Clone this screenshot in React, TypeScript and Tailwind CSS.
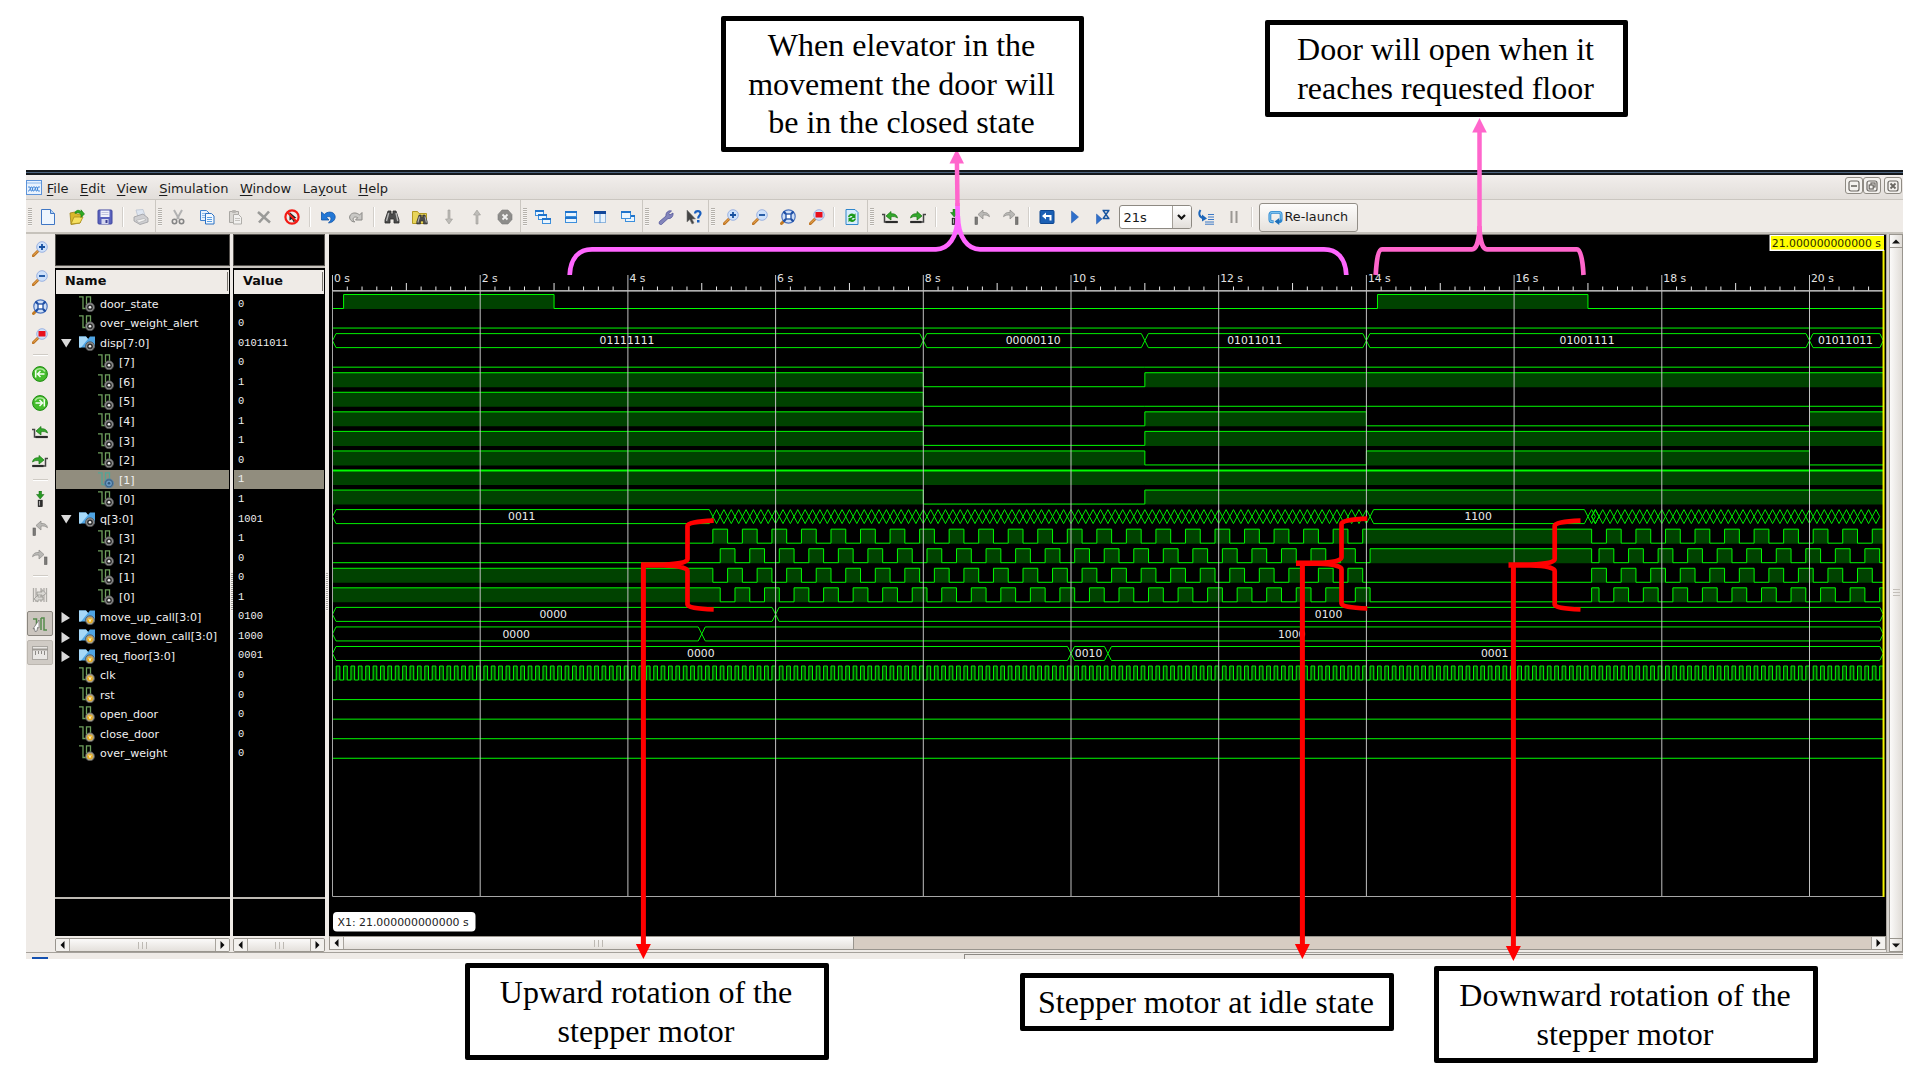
import React from "react";

type Seg = [number, number, string];

const X0 = 332.5;
const PX = 73.85;
const PITCH = 19.555;
const END = 21;
const tx = (t: number) => X0 + t * PX;
const rowTop = (i: number) => 294.5 + i * PITCH;
const HI = 14;

/* ------------------------------------------------------------------ */
/* Icons                                                               */
/* ------------------------------------------------------------------ */

const Svg = ({ children, s = 16 }: { children: React.ReactNode; s?: number }) => (
  <svg width={s} height={s} viewBox="0 0 16 16" fill="none" className="block shrink-0">
    {children}
  </svg>
);

const NewIcon = () => (
  <Svg>
    <path d="M1.5.5h9l4 4v11h-13z" fill="#eef5fd" stroke="#3f76c4" />
    <path d="M10.5.5v4h4" fill="#b7d3f3" stroke="#3f76c4" />
  </Svg>
);
const OpenIcon = () => (
  <Svg>
    <path d="M1 4l5-1 2 2h5v3l-2 6-9 1.500z" fill="#d9b82a" stroke="#9c8216" strokeWidth=".8" />
    <path d="M2 15l3-7h9l-3 6z" fill="#f5df5e" stroke="#a88d1c" strokeWidth=".8" />
    <path d="M6 3c2-2.500 5-2 6 0V.8L15.500 5 12 8.500V6C11 3.500 9 3 6 4.500z" fill="#2faa22" stroke="#157a10" strokeWidth=".6" />
  </Svg>
);
const SaveIcon = () => (
  <Svg>
    <rect x="1" y="1" width="14" height="14" rx="1" fill="#5b62bd" stroke="#4147a0" />
    <rect x="3.500" y="1.500" width="9" height="6.500" fill="#f2f2fa" />
    <path d="M4.500 3.500h7M4.500 5.500h7" stroke="#b5b8d8" strokeWidth=".8" />
    <rect x="4.500" y="10" width="7" height="5" fill="#d5d7ee" />
    <rect x="8.500" y="11" width="2" height="3" fill="#3a3f91" />
  </Svg>
);
const PrintIcon = () => (
  <Svg>
    <path d="M5 8L3 1l7-.5 2 6z" fill="#dfe6f1" stroke="#b4bdcb" strokeWidth=".7" />
    <path d="M1 8l9-3 5 4v4l-8 2.500L1 12z" fill="#cfcfd2" stroke="#9c9ca0" strokeWidth=".8" />
    <path d="M3 11.500l8-2 2 1.500-7 2.500z" fill="#f3f3f3" stroke="#aaa" strokeWidth=".6" />
  </Svg>
);
const CutIcon = () => (
  <Svg>
    <path d="M4 1l5 9M12 1L7 10" stroke="#b2b2b2" strokeWidth="2" />
    <circle cx="4.500" cy="12.500" r="2.200" stroke="#858585" strokeWidth="1.600" />
    <circle cx="11.500" cy="12.500" r="2.200" stroke="#858585" strokeWidth="1.600" />
  </Svg>
);
const CopyIcon = () => (
  <Svg>
    <path d="M1.500 1.500h6l2.500 2.500v7.500H1.500z" fill="#e6f1fd" stroke="#3f82cf" />
    <path d="M3 4.500h4M3 6.500h4M3 8.500h4" stroke="#8fbbe8" />
    <path d="M6.500 4.500h6L15 7v8H6.500z" fill="#f2f8fe" stroke="#2d72c4" />
    <path d="M8 8.500h5M8 10.500h5M8 12.500h5" stroke="#5c9fe2" />
  </Svg>
);
const PasteIcon = () => (
  <Svg>
    <path d="M2.500 2.500h9v11h-9z" fill="#dad8d4" stroke="#a9a7a3" />
    <rect x="5" y="1" width="4" height="3" rx="1" fill="#b7b5b1" />
    <path d="M6.500 5.500h5l3 3v6.500h-8z" fill="#f2f1ef" stroke="#b0aeaa" />
    <path d="M8 9.500h5M8 11.500h5" stroke="#c6c4c0" />
  </Svg>
);
const DeleteIcon = () => (
  <Svg>
    <path d="M2 3l12 10.500M13 2.500L3 13.500" stroke="#9a9a98" strokeWidth="2.600" />
  </Svg>
);
const BlockIcon = () => (
  <Svg>
    <path d="M5.500 3l7 6-2.500.3 1.500 3-2 .8-1.500-3-2.500 1.500z" fill="#222" />
    <circle cx="8" cy="8" r="6.600" stroke="#f21a14" strokeWidth="2.200" />
    <path d="M3.500 3.500l9 9" stroke="#f21a14" strokeWidth="2" />
  </Svg>
);
const UndoIcon = () => (
  <Svg>
    <path d="M1.500 3v8h7.500L6.500 8.300c3-1.800 5.500 0 4 3.200l-2 2.500c5.500-.5 8-5 6-8.500C12.500 2.300 7.500 2.300 4.300 5.500z" fill="#2277d6" stroke="#1254a8" strokeWidth=".8" />
  </Svg>
);
const RedoIcon = () => (
  <Svg>
    <path d="M14 3.500v7.500H7.500L9.700 8.700c-3-1.700-5.500 0-4.200 2.800l1.200 1.500C2 12.500.5 8.500 2.500 5.800c2.200-2.600 6.500-2.300 9 .2z" fill="#c9c8c5" stroke="#8a8986" strokeWidth="1" />
  </Svg>
);
const BinocPath = () => (
  <>
    <path d="M4 2h3v3h2V2h3l3 9v3h-5v-4H6v4H1v-3z" fill="#4b4b4b" stroke="#2c2c2c" strokeWidth=".8" />
    <path d="M4.700 4L2.500 12M12 4l1.800 8" stroke="#b5b5b5" strokeWidth="1.400" />
  </>
);
const FindIcon = () => (
  <Svg>
    <BinocPath />
  </Svg>
);
const FindFilesIcon = () => (
  <Svg>
    <path d="M.5 2.500h5l1.500 2h7.500v10H.5z" fill="#e8d55a" stroke="#b39a23" />
    <g transform="translate(4 4.500) scale(.75)">
      <BinocPath />
    </g>
  </Svg>
);
const ArrowDownIcon = () => (
  <Svg>
    <path d="M7 1h2v9h2.500L8 15l-3.500-5H7z" fill="#bebcb8" stroke="#9b9995" strokeWidth=".6" />
  </Svg>
);
const ArrowUpIcon = () => (
  <Svg>
    <path d="M7 15h2V6h2.500L8 1 4.500 6H7z" fill="#bebcb8" stroke="#9b9995" strokeWidth=".6" />
  </Svg>
);
const StopIcon = () => (
  <Svg>
    <path d="M5 1h6l4 4.500v5L11 15H5l-4-4.500v-5z" fill="#8d8c8a" stroke="#7b7a78" strokeWidth=".6" />
    <path d="M5.500 5.500l5 5M10.500 5.500l-5 5" stroke="#f2f2f2" strokeWidth="1.800" />
  </Svg>
);
const WinBox = ({ x, y, w, h }: { x: number; y: number; w: number; h: number }) => (
  <>
    <rect x={x + 0.5} y={y + 0.5} width={w - 1} height={h - 1} fill="#eaf5fe" stroke="#3d8fdc" />
    <rect x={x} y={y} width={w} height={2} fill="#1f74cc" />
  </>
);
const CascadeIcon = () => (
  <Svg>
    <WinBox x={0} y={1} w={9} h={6} />
    <WinBox x={3} y={5} w={9} h={6} />
    <WinBox x={7} y={9} w={9} h={6} />
  </Svg>
);
const TileHIcon = () => (
  <Svg>
    <WinBox x={2} y={2} w={12} h={6} />
    <WinBox x={2} y={8} w={12} h={6} />
  </Svg>
);
const TileVIcon = () => (
  <Svg>
    <rect x="2.500" y="2.500" width="11" height="11" fill="#e8f3fd" stroke="#8fb5dd" />
    <path d="M2 3.500h12" stroke="#12479a" strokeWidth="3" />
    <path d="M8 5v9" stroke="#5f9ad6" />
  </Svg>
);
const LayersIcon = () => (
  <Svg>
    <WinBox x={5} y={6} w={10} h={7} />
    <WinBox x={1} y={2} w={10} h={8} />
  </Svg>
);
const WrenchIcon = () => (
  <Svg>
    <path d="M1.500 12.500L8 7c-.5-3 2-6 5.500-5L10.800 4.500l1 1.500L15 4c.5 3.500-2 6-5 5.500l-6.500 6c-2 .5-3-1-2-3z" fill="#8385bb" stroke="#53569b" strokeWidth=".8" />
  </Svg>
);
const HelpIcon = () => (
  <Svg>
    <path d="M1 1v12l2.800-2.500L6 15l2-1-2-4h3.500z" fill="#444" stroke="#777" strokeWidth=".6" />
    <path d="M9 4.500c.3-3.300 5.500-3.300 5.500 0 0 2-2.300 2.200-2.300 5" stroke="#1a5fbe" strokeWidth="2.200" />
    <rect x="11" y="11" width="2.500" height="2.500" fill="#1a5fbe" />
  </Svg>
);
const Lens = ({ children }: { children?: React.ReactNode }) => (
  <Svg>
    <path d="M1.200 14.800L6.500 9.500" stroke="#bd7322" strokeWidth="2.800" strokeLinecap="round" />
    <path d="M1.500 14.200L6.200 9.500" stroke="#f0b056" strokeWidth="1" strokeLinecap="round" />
    <circle cx="10" cy="6" r="5.300" fill="#cfe1fa" stroke="#9cb3e2" strokeWidth="1" />
    {children}
  </Svg>
);
const ZoomInIcon = () => (
  <Lens>
    <path d="M7 6h6M10 3v6" stroke="#17509f" strokeWidth="1.800" />
  </Lens>
);
const ZoomOutIcon = () => (
  <Lens>
    <path d="M7 6h6" stroke="#17509f" strokeWidth="1.800" />
  </Lens>
);
const ZoomSelIcon = () => (
  <Lens>
    <rect x="6.500" y="3" width="7" height="5.500" fill="#e80f1c" />
  </Lens>
);
const ZoomFitIcon = () => (
  <Svg>
    <path d="M1.500 14.500L4 12" stroke="#c27a24" strokeWidth="3" strokeLinecap="round" />
    <circle cx="8.500" cy="7.500" r="6.700" fill="#cfdff6" stroke="#4b74bf" strokeWidth="1.200" />
    <rect x="6" y="5" width="5" height="5" fill="#fff" stroke="#1d4da4" strokeWidth="1.300" />
    <path d="M3.500 2.500L6 5M13.500 2.500L11 5M3.500 12.500L6 10M13.500 12.500L11 10" stroke="#1d4da4" strokeWidth="2.200" />
  </Svg>
);
const ReloadIcon = () => (
  <Svg>
    <path d="M2 .5h9l3 3v12H2z" fill="#d8ecfc" stroke="#2f86cc" />
    <path d="M4 8c.5-3.500 4.500-4.500 6.300-2.500l1.200-1.200V9H7l1.500-1.700C7.500 6.500 6 7 5.500 8z" fill="#1c9a1c" />
    <path d="M12 9.500c-.5 3.500-4.500 4.500-6.300 2.500L4.500 13.200V8.800H9l-1.500 1.500c1 .8 2.500.4 3-.8z" fill="#1c9a1c" />
  </Svg>
);
const PrevEdgeIcon = () => (
  <Svg>
    <path d="M0 5.500h2.500V13H16" stroke="#444" strokeWidth="1.500" />
    <path d="M3.500 13h12" stroke="#2b2b2b" strokeWidth="2.200" />
    <path d="M4 7l5-4.500v2.300c3.500-.5 6 1 6.500 4.200-2-1.500-4-1.700-6.500-1.200V11z" fill="#33a92c" stroke="#15720f" strokeWidth=".7" />
  </Svg>
);
const NextEdgeIcon = () => (
  <Svg>
    <path d="M0 13h13.500V5.500H16" stroke="#444" strokeWidth="1.500" />
    <path d="M.5 13h11" stroke="#2b2b2b" strokeWidth="2.200" />
    <path d="M12 7L7 2.500v2.300C3.500 4.300 1 5.800.5 9c2-1.500 4-1.700 6.500-1.200V11z" fill="#33a92c" stroke="#15720f" strokeWidth=".7" />
  </Svg>
);
const AddMarkerIcon = () => (
  <Svg>
    <path d="M7 0h2.500v3.500H12L8.200 8 4.500 3.500H7z" fill="#279a24" stroke="#12650f" strokeWidth=".5" />
    <rect x="6.200" y="9.200" width="4" height="6.300" fill="#333" stroke="#111" strokeWidth=".7" />
    <path d="M7.500 10v4.500" stroke="#aaa" />
  </Svg>
);
const PrevMarkerIcon = () => (
  <Svg>
    <rect x="1" y="8" width="2.500" height="7.500" fill="#7b7a78" stroke="#5f5e5c" strokeWidth=".6" />
    <path d="M4 5.500L9 1v2.500c3.500-.5 6 1 6.500 4.200-2-1.500-4-2-6.500-1.500V10z" fill="#b9b8b5" stroke="#8c8b88" strokeWidth=".7" />
  </Svg>
);
const NextMarkerIcon = () => (
  <Svg>
    <rect x="12.500" y="8" width="2.500" height="7.500" fill="#7b7a78" stroke="#5f5e5c" strokeWidth=".6" />
    <path d="M12 5.500L7 1v2.500C3.500 3 1 4.500.5 7.700c2-1.500 4-2 6.500-1.500V10z" fill="#b9b8b5" stroke="#8c8b88" strokeWidth=".7" />
  </Svg>
);
const RestartIcon = () => (
  <Svg>
    <rect x="1" y="1.500" width="14" height="13" rx="1" fill="#1b5fb4" stroke="#0d4690" />
    <path d="M3 7l4-3.500V6h5.500v5.500h-2V8H7v2.500z" fill="#fff" />
  </Svg>
);
const PlayIcon = () => (
  <Svg>
    <path d="M4.500 2v12l7-6z" fill="#2f6fcb" stroke="#1f56a8" strokeWidth=".5" />
  </Svg>
);
const PlayForIcon = () => (
  <Svg>
    <path d="M1.500 5v10L7 10z" fill="#2f6fcb" stroke="#1f56a8" strokeWidth=".5" />
    <path d="M7.500 1.500h7M7.500 9.500h7M8.500 2l5 7M13.500 2l-5 7" stroke="#17559f" strokeWidth="1.400" />
  </Svg>
);
const StepIcon = () => (
  <Svg>
    <path d="M2.500 1C.5 4 1 8 5 9" stroke="#1d66ba" strokeWidth="2" />
    <path d="M4 5.500L9 9.500l-5 3z" fill="#1d66ba" />
    <path d="M10 5.500h6M10 8h6M10 10.500h6M7 13h9M7 15.200h9" stroke="#3b78c6" strokeWidth="1" />
  </Svg>
);
const PauseIcon = () => (
  <Svg>
    <path d="M5.500 2v12M10.500 2v12" stroke="#9b9894" strokeWidth="2" />
  </Svg>
);
const RelaunchIcon = () => (
  <svg width="15" height="15" viewBox="0 0 16 16" fill="none" className="block shrink-0">
    <path d="M6 12.500H4.500a2.500 2.500 0 01-2.500-2.500V5a2.500 2.500 0 012.500-2.500h7A2.500 2.500 0 0114 5v5a2.500 2.500 0 01-2.500 2.500" stroke="#2b86cf" strokeWidth="3" />
    <path d="M6 12.500H4.500a2.500 2.500 0 01-2.500-2.500V5a2.500 2.500 0 012.500-2.500h7A2.500 2.500 0 0114 5v5" stroke="#7cc2ee" strokeWidth="1.200" />
    <path d="M12 8.500v7.500l-5-3.700z" fill="#1e6fb8" />
  </svg>
);
const GreenCircle = ({ flip }: { flip?: boolean }) => (
  <Svg>
    <circle cx="8" cy="8" r="7.400" fill="#45bd2c" stroke="#1f8a12" />
    <path d="M3 5.500a6 6 0 0110 0" stroke="#a7e896" strokeWidth="1.500" />
    <path
      d={flip ? "M3.500 8h6.500M7.500 5l3 3-3 3M12.300 4.500v7" : "M12.500 8H6M8.500 5l-3 3 3 3M3.700 4.500v7"}
      stroke="#f3fff0"
      strokeWidth="1.500"
    />
  </Svg>
);
const SwapIcon = () => (
  <Svg>
    <path d="M1.500 1v14M4 1v14M9 1v14M12 1v14M14.500 1v14" stroke="#aeaca8" strokeWidth="1.300" />
    <path d="M5 5h5V2.500l4 4-4 3V8H5zM11 10H6V8l-4 4 4 3v-2h5z" fill="#d9d7d3" stroke="#918f8b" strokeWidth=".7" />
  </Svg>
);
const SnapIcon = () => (
  <Svg>
    <path d="M1 3h3.500v10M9 2v12M9 2h3v12h3" stroke="#568c4c" strokeWidth="1.500" />
    <path d="M7 4v8l-1.500-.5L5 15l-2 .5-.5-3L1 13z" fill="#fff" stroke="#666" strokeWidth=".7" />
  </Svg>
);
const RulerIcon = () => (
  <Svg>
    <rect x=".5" y="1.500" width="15" height="13" fill="#e9e7e4" stroke="#a9a6a1" />
    <path d="M0 4.500h16" stroke="#9c9994" strokeWidth="2" />
    <path d="M3.500 6v4M6.500 6v3M9.500 6v3M12.500 6v4" stroke="#8d8a86" />
  </Svg>
);

const Badge = ({ kind }: { kind: "out" | "in" | "sel" }) => (
  <>
    <circle
      cx="11"
      cy="11.300"
      r="4.500"
      fill={kind === "in" ? "#a8a28c" : kind === "sel" ? "#3e6485" : "#8f8f8f"}
      stroke={kind === "sel" ? "#5d87aa" : "#4d4d4d"}
      strokeWidth=".8"
    />
    <circle cx="11" cy="11.300" r="2.900" fill={kind === "in" ? "#e8ad20" : kind === "sel" ? "#6a9ac4" : "#333"} />
    {kind === "in" ? (
      <path d="M9.800 9.800l1.200 3 1.200-3" stroke="#fff3c8" strokeWidth=".9" />
    ) : (
      <circle cx="11" cy="11.300" r="1.300" fill={kind === "sel" ? "#30577a" : "#f0f0f0"} />
    )}
  </>
);
const WireIcon = ({ kind }: { kind: "out" | "in" | "sel" }) => (
  <Svg>
    <path d="M0 .8h4v11.700h3.500V.8h4V9" stroke={kind === "sel" ? "#53a596" : "#6e9f5d"} strokeWidth="1.300" />
    <Badge kind={kind} />
  </Svg>
);
const BusIcon = ({ kind }: { kind: "out" | "in" | "sel" }) => (
  <Svg>
    <path d="M0 1.500h7l2 2.500 2-2.500h5v11h-5l-2-2.500-2 2.500H0z" fill="#4ea4e4" />
    <path d="M0 1.500h7l2 2.500L2 12.500H0z" fill="#a6d8f8" />
    <Badge kind={kind} />
  </Svg>
);

/* ------------------------------------------------------------------ */
/* Toolbar                                                             */
/* ------------------------------------------------------------------ */

const Slot = ({ children }: { children: React.ReactNode }) => (
  <div className="flex w-[28.4px] shrink-0 items-center justify-center">{children}</div>
);
const Sep = () => (
  <div className="flex w-[7.4px] shrink-0 justify-center">
    <div className="h-[20px] w-px bg-[#d3cfca]" />
    <div className="h-[20px] w-px bg-white" />
  </div>
);
const Grip = () => (
  <div className="flex w-[8.1px] shrink-0 justify-center">
    <div className="h-[18px] w-[4px] bg-[repeating-linear-gradient(#b5b1ab_0_1px,#f6f4f2_1px_2px)]" />
  </div>
);
const Group = ({ children, last }: { children: React.ReactNode; last?: boolean }) => (
  <div className={last ? "flex h-full items-center pt-[2px]" : "flex h-full items-center border-r border-[#cbc7c1] pt-[2px]"}>
    <Grip />
    {children}
  </div>
);

const Toolbar = () => (
  <div className="flex h-[34px] items-stretch border-b-2 border-[#c6c2bb] bg-[#efebe7]">
    <div className="flex items-center">
      <Group>
        <Slot><NewIcon /></Slot>
        <Slot><OpenIcon /></Slot>
        <Slot><SaveIcon /></Slot>
        <Sep />
        <Slot><PrintIcon /></Slot>
      </Group>
      <Group>
        <Slot><CutIcon /></Slot>
        <Slot><CopyIcon /></Slot>
        <Slot><PasteIcon /></Slot>
        <Slot><DeleteIcon /></Slot>
        <Slot><BlockIcon /></Slot>
        <Sep />
        <Slot><UndoIcon /></Slot>
        <Slot><RedoIcon /></Slot>
        <Sep />
        <Slot><FindIcon /></Slot>
        <Slot><FindFilesIcon /></Slot>
        <Slot><ArrowDownIcon /></Slot>
        <Slot><ArrowUpIcon /></Slot>
        <Slot><StopIcon /></Slot>
      </Group>
      <Group>
        <Slot><CascadeIcon /></Slot>
        <Slot><TileHIcon /></Slot>
        <Slot><TileVIcon /></Slot>
        <Slot><LayersIcon /></Slot>
      </Group>
      <Group>
        <Slot><WrenchIcon /></Slot>
        <Slot><HelpIcon /></Slot>
      </Group>
      <Group>
        <Slot><ZoomInIcon /></Slot>
        <Slot><ZoomOutIcon /></Slot>
        <Slot><ZoomFitIcon /></Slot>
        <Slot><ZoomSelIcon /></Slot>
        <Sep />
        <Slot><ReloadIcon /></Slot>
      </Group>
      <Group last>
        <Slot><PrevEdgeIcon /></Slot>
        <Slot><NextEdgeIcon /></Slot>
        <Sep />
        <Slot><AddMarkerIcon /></Slot>
        <Slot><PrevMarkerIcon /></Slot>
        <Slot><NextMarkerIcon /></Slot>
        <Sep />
        <Slot><RestartIcon /></Slot>
        <Slot><PlayIcon /></Slot>
        <Slot><PlayForIcon /></Slot>
        <div className="ml-px flex h-[24px] w-[73px] shrink-0 overflow-hidden rounded-[3px] border border-[#8d8982] bg-white">
          <div className="flex flex-1 items-center pl-[4px] text-[13px] leading-none text-[#1a1a1a]">21s</div>
          <div className="flex w-[19px] items-center justify-center border-l border-[#a39f98] bg-gradient-to-b from-white to-[#e2deda]">
            <svg width="9" height="6" viewBox="0 0 9 6" fill="none">
              <path d="M1 1l3.500 3.500L8 1" stroke="#111" strokeWidth="2.200" />
            </svg>
          </div>
        </div>
        <Slot><StepIcon /></Slot>
        <Slot><PauseIcon /></Slot>
        <Sep />
        <div className="ml-[3px] flex h-[29px] w-[99px] shrink-0 items-center justify-center gap-[1px] rounded-[3px] border border-[#928e87] bg-gradient-to-b from-[#fdfcfb] to-[#e6e2dd] text-[12.800px] leading-none whitespace-nowrap text-[#1a1a1a]">
          <RelaunchIcon />
          <span>Re-launch</span>
        </div>
      </Group>
    </div>
  </div>
);

/* ------------------------------------------------------------------ */
/* Menu bar                                                            */
/* ------------------------------------------------------------------ */

const MENUS: [string, string, string][] = [
  ["", "F", "ile"],
  ["", "E", "dit"],
  ["", "V", "iew"],
  ["", "S", "imulation"],
  ["", "W", "indow"],
  ["La", "y", "out"],
  ["", "H", "elp"],
];

const MdiButton = ({ children }: { children: React.ReactNode }) => (
  <div className="flex h-[17px] w-[18px] items-center justify-center rounded-[3px] border border-[#8f8b84] bg-[#f4f2ef]">
    <svg width="12" height="12" viewBox="0 0 12 12" fill="none" stroke="#6a6762" strokeWidth="1.200">
      <rect x="1" y="1" width="10" height="10" rx="2" />
      {children}
    </svg>
  </div>
);

const MenuBar = () => (
  <div className="flex h-[25px] items-start border-b border-[#cac6c0] bg-gradient-to-b from-[#f2eeec] to-[#e2deda]">
    <div className="mt-[5px] flex h-[15px] w-[16px] shrink-0 items-center justify-center border border-[#5d93d8] bg-[#e9f2fd]">
      <svg width="14" height="12" viewBox="0 0 14 12" fill="none">
        <path d="M0 1h14" stroke="#a9cbf2" strokeWidth="1.500" />
        <path d="M1 5h2l1 4h1l1-4h2l1 4h1l1-4h2M1 9h1l2-4h1l1 4h1l2-4h1l1 4h2" stroke="#3f86d8" strokeWidth=".9" />
      </svg>
    </div>
    <div className="flex gap-[11.500px] pt-[5.500px] pl-[4.800px] text-[13px] leading-[16px] text-[#1c1c1c]">
      {MENUS.map(([a, b, c]) => (
        <span key={a + b + c}>
          {a}
          <span className="underline underline-offset-2">{b}</span>
          {c}
        </span>
      ))}
    </div>
    <div className="mt-[2px] mr-px ml-auto flex">
      <MdiButton><path d="M3 6h6" strokeWidth="1.600" /></MdiButton>
      <MdiButton>
        <rect x="5" y="3" width="4" height="4" />
        <rect x="3.200" y="5" width="4" height="4" fill="#f4f2ef" />
      </MdiButton>
      <div className="w-[3px]" />
      <MdiButton><path d="M3.500 3.500l5 5M8.500 3.500l-5 5" strokeWidth="1.800" /></MdiButton>
    </div>
  </div>
);

/* ------------------------------------------------------------------ */
/* Side bar                                                            */
/* ------------------------------------------------------------------ */

const SideSlot = ({ children }: { children: React.ReactNode }) => (
  <div className="flex h-[29.200px] shrink-0 items-center justify-center">{children}</div>
);
const SideSep = () => (
  <div className="flex h-[8.300px] shrink-0 items-center justify-center">
    <div className="h-[2px] w-[15px] border-t border-[#cfcbc5] bg-white" />
  </div>
);
const Pressed = ({ children, on }: { children: React.ReactNode; on?: boolean }) => (
  <div
    className={
      on
        ? "flex h-[25px] w-[26px] items-center justify-center rounded-[2px] border border-[#8a867f] bg-[#cbc5be]"
        : "flex h-[25px] w-[26px] items-center justify-center rounded-[2px] border border-[#bcb7b0] bg-[#d0cbc5]"
    }
  >
    {children}
  </div>
);
const SideBar = () => (
  <div className="flex w-[29px] shrink-0 flex-col bg-[#efebe7] pr-px">
    <SideSlot><ZoomInIcon /></SideSlot>
    <SideSlot><ZoomOutIcon /></SideSlot>
    <SideSlot><ZoomFitIcon /></SideSlot>
    <SideSlot><ZoomSelIcon /></SideSlot>
    <SideSep />
    <SideSlot><GreenCircle /></SideSlot>
    <SideSlot><GreenCircle flip /></SideSlot>
    <SideSlot><PrevEdgeIcon /></SideSlot>
    <SideSlot><NextEdgeIcon /></SideSlot>
    <SideSep />
    <SideSlot><AddMarkerIcon /></SideSlot>
    <SideSlot><PrevMarkerIcon /></SideSlot>
    <SideSlot><NextMarkerIcon /></SideSlot>
    <SideSep />
    <SideSlot><SwapIcon /></SideSlot>
    <SideSlot><Pressed on><SnapIcon /></Pressed></SideSlot>
    <SideSlot><Pressed><RulerIcon /></Pressed></SideSlot>
  </div>
);

/* ------------------------------------------------------------------ */
/* Signal tree                                                         */
/* ------------------------------------------------------------------ */

type Row = { name: string; value: string; kind: "out" | "in" | "sel"; bus?: "open" | "closed"; child?: boolean };
const bit = (n: number, value: string, kind: "out" | "sel" = "out"): Row => ({ name: `[${n}]`, value, kind, child: true });
const ROWS: Row[] = [
  { name: "door_state", value: "0", kind: "out" },
  { name: "over_weight_alert", value: "0", kind: "out" },
  { name: "disp[7:0]", value: "01011011", kind: "out", bus: "open" },
  bit(7, "0"),
  bit(6, "1"),
  bit(5, "0"),
  bit(4, "1"),
  bit(3, "1"),
  bit(2, "0"),
  bit(1, "1", "sel"),
  bit(0, "1"),
  { name: "q[3:0]", value: "1001", kind: "out", bus: "open" },
  bit(3, "1"),
  bit(2, "0"),
  bit(1, "0"),
  bit(0, "1"),
  { name: "move_up_call[3:0]", value: "0100", kind: "in", bus: "closed" },
  { name: "move_down_call[3:0]", value: "1000", kind: "in", bus: "closed" },
  { name: "req_floor[3:0]", value: "0001", kind: "in", bus: "closed" },
  { name: "clk", value: "0", kind: "in" },
  { name: "rst", value: "0", kind: "in" },
  { name: "open_door", value: "0", kind: "in" },
  { name: "close_door", value: "0", kind: "in" },
  { name: "over_weight", value: "0", kind: "in" },
];

const NameRow = ({ r }: { r: Row }) => (
  <div className={r.kind === "sel" ? "mx-[1px] h-[19.555px] bg-[#918d7e]" : "mx-[1px] h-[19.555px]"}>
    <div className={r.child ? "flex h-full items-center pl-[42px]" : "flex h-full items-center pl-[5px]"}>
      {!r.child && (
        <span className="flex w-[18px] shrink-0 items-center pt-[2px]">
          {r.bus && (
            <svg width="11" height="11" viewBox="0 0 11 11" fill="#dadada">
              <path d={r.bus === "open" ? "M0 1h10.500L5.200 9.500z" : "M.5 0v11l8.500-5z"} />
            </svg>
          )}
        </span>
      )}
      {r.bus ? <BusIcon kind={r.kind} /> : <WireIcon kind={r.kind} />}
      <span className="pt-[1px] pl-[5px] text-[11.050px] leading-none whitespace-nowrap text-[#f0f0f0]">{r.name}</span>
    </div>
  </div>
);

const ArrowCell = ({ dir }: { dir: "left" | "right" }) => (
  <div
    className={
      dir === "left"
        ? "flex w-[14px] shrink-0 items-center justify-center border-r border-[#a8a49d] bg-[#f3f1ee]"
        : "flex w-[14px] shrink-0 items-center justify-center border-l border-[#a8a49d] bg-[#f3f1ee]"
    }
  >
    <svg width="5" height="8" viewBox="0 0 5 8" fill="#0a0a0a">
      <path d={dir === "left" ? "M4.500 0v8L.5 4z" : "M.5 0v8l4-4z"} />
    </svg>
  </div>
);
const HGrip = () => <div className="h-[7px] w-[9px] bg-[repeating-linear-gradient(90deg,#bdb9b3_0_1px,transparent_1px_4px)]" />;
const HScroll = () => (
  <div className="flex h-[14px] shrink-0 overflow-hidden rounded-[2px] border border-[#99958e]">
    <ArrowCell dir="left" />
    <div className="flex flex-1 items-center justify-center bg-gradient-to-b from-[#fbfaf9] to-[#e4e0db]">
      <HGrip />
    </div>
    <ArrowCell dir="right" />
  </div>
);

const Column = ({ title, children }: { title: string; children: React.ReactNode }) => (
  <>
    <div className="h-[32px] shrink-0 border border-[#55524e] bg-black" />
    <div className="h-[2px] shrink-0 bg-[#c9c5bf]" />
    <div className="flex h-[26px] shrink-0 border-x border-t-2 border-black bg-[#efebe7]">
      <div className="mt-[2px] mr-[1px] mb-[3px] flex flex-1 items-center border-r border-[#77736d] pl-[9px] text-[12.800px] leading-none font-bold text-[#0c0c0c]">
        {title}
      </div>
    </div>
    <div className="h-[603px] shrink-0 bg-black">{children}</div>
    <div className="h-[2px] shrink-0 bg-[#bdb9b3]" />
    <div className="mb-[2px] h-[37px] shrink-0 bg-black" />
    <HScroll />
  </>
);

const SplitGrip = () => <div className="h-[38px] w-[2px] bg-[repeating-linear-gradient(#a5a19b_0_1px,#f6f4f2_1px_2px)]" />;

/* ------------------------------------------------------------------ */
/* Waveforms                                                           */
/* ------------------------------------------------------------------ */

const DISP: Seg[] = [
  [0, 8, "01111111"],
  [8, 11, "00000110"],
  [11, 14, "01011011"],
  [14, 20, "01001111"],
  [20, 21, "01011011"],
];

type Edge = [number, number];

const dispBit = (n: number): Edge[] => DISP.map(([a, , code]) => [a, Number(code[7 - n])] as Edge);

const pulses = (start: number, stop: number): Edge[] => {
  const out: Edge[] = [];
  for (let t = start; t < stop - 0.001; t += 0.4) {
    out.push([t, 1]);
    if (t + 0.2 < stop + 0.001) out.push([t + 0.2, 0]);
  }
  return out;
};

const CLK: Edge[] = [[0, 0]];
for (let k = 0; k < 210; k++) {
  CLK.push([k * 0.1 + 0.05, 1]);
  CLK.push([(k + 1) * 0.1, 0]);
}

const LEVELS: { row: number; edges: Edge[]; bold?: boolean }[] = [
  { row: 0, edges: [[0, 0], [0.15, 1], [3, 0], [14.15, 1], [17, 0]] },
  { row: 1, edges: [[0, 0]] },
  ...[7, 6, 5, 4, 3, 2, 1, 0].map((n) => ({ row: 10 - n, edges: dispBit(n), bold: n === 1 })),
  { row: 12, edges: [[0, 0], ...pulses(5.15, 13.9), [13.95, 1], [17.05, 0], ...pulses(17.25, END)] },
  { row: 13, edges: [[0, 0], ...pulses(5.25, 14), [14.05, 1], [17.05, 0], ...pulses(17.15, END)] },
  { row: 14, edges: [[0, 1], [5.15, 0], ...pulses(5.35, 13.95), [17.05, 1], [17.25, 0], ...pulses(17.45, END)] },
  { row: 15, edges: [[0, 1], [5.25, 0], ...pulses(5.45, 14.05), [17.05, 1], [17.15, 0], ...pulses(17.35, END)] },
  { row: 19, edges: CLK },
  { row: 20, edges: [[0, 0]] },
  { row: 21, edges: [[0, 0]] },
  { row: 22, edges: [[0, 0]] },
  { row: 23, edges: [[0, 0]] },
];

const Level = ({ row, edges, bold }: { row: number; edges: Edge[]; bold?: boolean }) => {
  const hi = rowTop(row);
  const lo = hi + HI;
  let line = "";
  let fill = "";
  edges.forEach(([t, v], i) => {
    const next = Math.min(i + 1 < edges.length ? edges[i + 1][0] : END, END);
    const a = tx(t).toFixed(2);
    const b = tx(next).toFixed(2);
    const y = v ? hi : lo;
    line += `${i === 0 ? "M" : "L"}${a} ${y}L${b} ${y}`;
    if (v) fill += `M${a} ${hi}L${b} ${hi}L${b} ${lo + 0.5}L${a} ${lo + 0.5}z`;
  });
  return (
    <>
      <path d={fill} fill="#004200" />
      <path d={line} stroke="#00fa00" strokeWidth={bold ? 2 : 1} fill="none" />
    </>
  );
};

const busPath = (row: number, a: number, b: number, slope = 3.5) => {
  const t = rowTop(row);
  const m = t + HI / 2;
  const l = t + HI;
  const xa = tx(a);
  const xb = tx(b);
  const s = Math.min(slope, (xb - xa) / 2);
  return `M${xa} ${m}L${xa + s} ${t}L${xb - s} ${t}L${xb} ${m}L${xb - s} ${l}L${xa + s} ${l}z`;
};

const BUSES: { row: number; segs: Seg[] }[] = [
  { row: 2, segs: DISP },
  { row: 11, segs: [[0, 5.15, "0011"], [14.05, 17, "1100"]] },
  { row: 16, segs: [[0, 6, "0000"], [6, 21, "0100"]] },
  { row: 17, segs: [[0, 5, "0000"], [5, 21, "1000"]] },
  { row: 18, segs: [[0, 10, "0000"], [10, 10.5, "0010"], [10.5, 21, "0001"]] },
];

const range = (n: number) => Array.from({ length: n }, (_, i) => i);

const toggles =
  range(89).map((k) => busPath(11, 5.15 + k * 0.1, 5.25 + k * 0.1, 3.7)).join("") +
  range(2).map((k) => busPath(11, 17.0 + k * 0.05, 17.1 + k * 0.05, 3.7)).join("") +
  range(39).map((k) => busPath(11, 17.05 + k * 0.1, 17.15 + k * 0.1, 3.7)).join("");

const Waves = () => (
  <svg width="1557" height="701" viewBox="329 235 1557 701" className="block shrink-0 bg-black font-['DejaVu_Sans',sans-serif]">
    {LEVELS.map((l) => (
      <Level key={l.row} {...l} />
    ))}
    {BUSES.map(({ row, segs }) => (
      <path key={row} d={segs.map(([a, b]) => busPath(row, a, b)).join("")} stroke="#00f000" fill="none" />
    ))}
    <path d={toggles} stroke="#00ec00" fill="none" />

    <path d={`M${X0} 290.800H${tx(END)}`} stroke="#e8e8e8" strokeWidth="1.300" />
    {range(106).map((k) => {
      const x = tx(k * 0.2);
      if (k % 10 === 0 || k > 104) return null;
      return <path key={k} d={`M${x} ${k % 5 === 0 ? 283 : 286.500}V290.500`} stroke="#e6e6e6" />;
    })}
    {range(11).map((k) => (
      <path key={k} d={`M${tx(k * 2)} ${275}V${k === 0 ? 291 : 897}`} stroke="#c0c0c0" />
    ))}
    <path d={`M${X0} 291V896.500H${tx(END)}`} stroke="#a6a6a6" fill="none" />

    {range(11).map((k) => (
      <text key={k} x={tx(k * 2) + 1.5} y="281.500" fontSize="10.800" fill="#e4e4e4">
        {`${k * 2} s`}
      </text>
    ))}
    {BUSES.map(({ row, segs }) =>
      segs.map(([a, b, label]) => (
        <text key={row + label + a} x={(tx(a) + tx(b)) / 2 - 0.9} y={rowTop(row) + 10.700} textAnchor="middle" fontSize="10.800" fill="#ececec">
          {label}
        </text>
      )),
    )}

    <path d={`M${tx(END) + 0.2} 250V897`} stroke="#f4f400" strokeWidth="2" />
    <rect x="1769.500" y="235" width="114.500" height="16" fill="#fff" />
    <rect x="1771" y="236" width="113" height="13.500" fill="#ffff00" />
    <text x="1771.800" y="246.500" fontSize="10.850" fill="#2c2c00">21.000000000000 s</text>

    <rect x="333" y="912" width="142.500" height="19.500" rx="4" fill="#fff" />
    <text x="337.500" y="925.800" fontSize="10.900" fill="#222">X1: 21.000000000000 s</text>
  </svg>
);

/* ------------------------------------------------------------------ */
/* Annotations                                                         */
/* ------------------------------------------------------------------ */

const RedBrace = ({ bar, end, top, mid, bottom, left, stem, tip }: Record<"bar" | "end" | "top" | "mid" | "bottom" | "left" | "stem" | "tip", number>) => (
  <>
    <path
      d={`M${end} ${top}Q${bar} ${top + 1} ${bar} ${top + 5}V${mid - 6}Q${bar} ${mid - 1} ${bar - 24} ${mid - 0.4}H${left}M${left} ${mid + 0.4}H${bar - 24}Q${bar} ${mid + 1} ${bar} ${mid + 6}V${bottom - 5}Q${bar} ${bottom - 1} ${end} ${bottom}`}
      stroke="#ff0000"
      strokeWidth="4.700"
      fill="none"
    />
    <path d={`M${stem} ${mid}V${tip - 13}`} stroke="#ff0000" strokeWidth="5" />
    <path d={`M${stem - 7.500} ${tip - 15}h15l-7.500 15z`} fill="#ff0000" />
  </>
);

const Annotations = () => (
  <svg width="1920" height="1080" viewBox="0 0 1920 1080" fill="none" className="pointer-events-none absolute inset-0">
    <path
      d="M569.700 275C570.500 258 579 249.300 592 249.300H936C948 249.300 957.500 238 957.800 216M957.800 216C958.200 238 968 249.300 980 249.300H1324C1337 249.300 1345.500 258 1346.300 275"
      stroke="#ff66ff"
      strokeWidth="4.700"
    />
    <path d="M957.800 228L957.500 203" stroke="#ff66ff" strokeWidth="4.700" />
    <path d="M957.500 206L956.900 160" stroke="#ff66cc" strokeWidth="4.500" />
    <path d="M949.500 163.500h14.500l-7.300-14.500z" fill="#ff66cc" />
    <path
      d="M1375.700 275C1376.500 262 1378 249.300 1382 249.300H1472C1477 249.300 1479.300 238 1479.500 226C1479.700 238 1482 249.300 1487 249.300H1577C1581 249.300 1582.800 262 1583.500 275"
      stroke="#ff66cc"
      strokeWidth="4.700"
    />
    <path d="M1479.500 240V130" stroke="#ff66cc" strokeWidth="4.500" />
    <path d="M1472.200 132.500h14.600l-7.300-14.500z" fill="#ff66cc" />
    <RedBrace bar={687.5} end={713.7} top={520.7} mid={565} bottom={609.5} left={641} stem={643.4} tip={959} />
    <RedBrace bar={1341.5} end={1367.3} top={518.7} mid={563.3} bottom={608.5} left={1296} stem={1302.4} tip={959} />
    <RedBrace bar={1554.7} end={1580.5} top={520.7} mid={565} bottom={609.5} left={1508.5} stem={1513.4} tip={961} />
  </svg>
);

const CALLOUT = "absolute flex flex-col items-center justify-center rounded-[2px] border-[5px] border-black bg-white pr-[2px] font-['Liberation_Serif',serif] text-[32px] leading-[38.400px] whitespace-nowrap text-black";

/* ------------------------------------------------------------------ */

export default function App() {
  return (
    <div className="relative h-[1080px] w-[1920px] overflow-hidden bg-white pt-[170px] pl-[26px] font-['DejaVu_Sans',sans-serif]">
      <div className="flex h-[789px] w-[1877px] flex-col bg-[#efebe7]">
        <div className="flex h-[5px] flex-col justify-center bg-[#14181c]">
          <div className="h-px bg-[#4d6480]" />
        </div>
        <MenuBar />
        <Toolbar />
        <div className="flex h-[718px]">
          <SideBar />
          <div className="flex w-[175px] shrink-0 flex-col">
            <Column title="Name">
              {ROWS.map((r, i) => (
                <NameRow key={i} r={r} />
              ))}
            </Column>
          </div>
          <div className="flex w-[3px] shrink-0 justify-center pt-[339px]">
            <SplitGrip />
          </div>
          <div className="flex w-[92px] shrink-0 flex-col">
            <Column title="Value">
              {ROWS.map((r, i) => (
                <div
                  key={i}
                  className={
                    r.kind === "sel"
                      ? "mx-[1px] flex h-[19.555px] items-center bg-[#918d7e] pl-[4px]"
                      : "mx-[1px] flex h-[19.555px] items-center pl-[4px]"
                  }
                >
                  <span className="font-['Liberation_Mono',monospace] text-[10.400px] leading-none text-[#f2f2f2]">{r.value}</span>
                </div>
              ))}
            </Column>
          </div>
          <div className="flex w-[4px] shrink-0 justify-center pt-[339px]">
            <SplitGrip />
          </div>
          <div className="flex w-[1557px] shrink-0 flex-col">
            <div className="h-px shrink-0 bg-[#77746f]" />
            <Waves />
            <div className="flex h-[14px] shrink-0 border border-[#99958e] bg-[#d7cdc3]">
              <ArrowCell dir="left" />
              <div className="flex w-[510px] items-center justify-center border-r border-[#99958e] bg-gradient-to-b from-[#fbfaf9] to-[#e4e0db]">
                <HGrip />
              </div>
              <div className="flex-1" />
              <ArrowCell dir="right" />
            </div>
          </div>
          <div className="w-[3px] shrink-0 border-l border-[#a9a59f] bg-[#d8d4cf]" />
          <div className="flex w-[14px] shrink-0 flex-col border border-[#99958e] bg-gradient-to-r from-[#fbfaf9] to-[#e0dcd7]">
            <div className="flex h-[13px] items-center justify-center border-b border-[#99958e]">
              <svg width="8" height="5" viewBox="0 0 8 5" fill="#111"><path d="M0 4.500h8L4 .5z" /></svg>
            </div>
            <div className="flex flex-1 items-center justify-center">
              <div className="h-[9px] w-[7px] bg-[repeating-linear-gradient(#c3bfb9_0_1px,transparent_1px_3px)]" />
            </div>
            <div className="flex h-[13px] items-center justify-center border-t border-[#99958e]">
              <svg width="8" height="5" viewBox="0 0 8 5" fill="#111"><path d="M0 .5h8L4 4.500z" /></svg>
            </div>
          </div>
        </div>
        <div className="flex h-[7px] items-end border-t border-[#a5a19b]">
          <div className="ml-[6px] h-[2px] w-[16px] bg-[#1450b0]" />
          <div className="ml-[916px] h-[5px] flex-1 border-t border-l border-[#8d8984]" />
        </div>
      </div>

      <Annotations />

      <div className={`${CALLOUT} top-[16px] left-[721px] h-[136px] w-[363px]`}>
        <span>When elevator in the</span>
        <span>movement the door will</span>
        <span>be in the closed state</span>
      </div>
      <div className={`${CALLOUT} top-[20px] left-[1265px] h-[97px] w-[363px]`}>
        <span>Door will open when it</span>
        <span>reaches requested floor</span>
      </div>
      <div className={`${CALLOUT} top-[963px] left-[465px] h-[97px] w-[364px]`}>
        <span>Upward rotation of the</span>
        <span>stepper motor</span>
      </div>
      <div className={`${CALLOUT} top-[973px] left-[1020px] h-[58px] w-[374px]`}>
        <span>Stepper motor at idle state</span>
      </div>
      <div className={`${CALLOUT} top-[966px] left-[1434px] h-[97px] w-[384px]`}>
        <span>Downward rotation of the</span>
        <span>stepper motor</span>
      </div>
    </div>
  );
}
